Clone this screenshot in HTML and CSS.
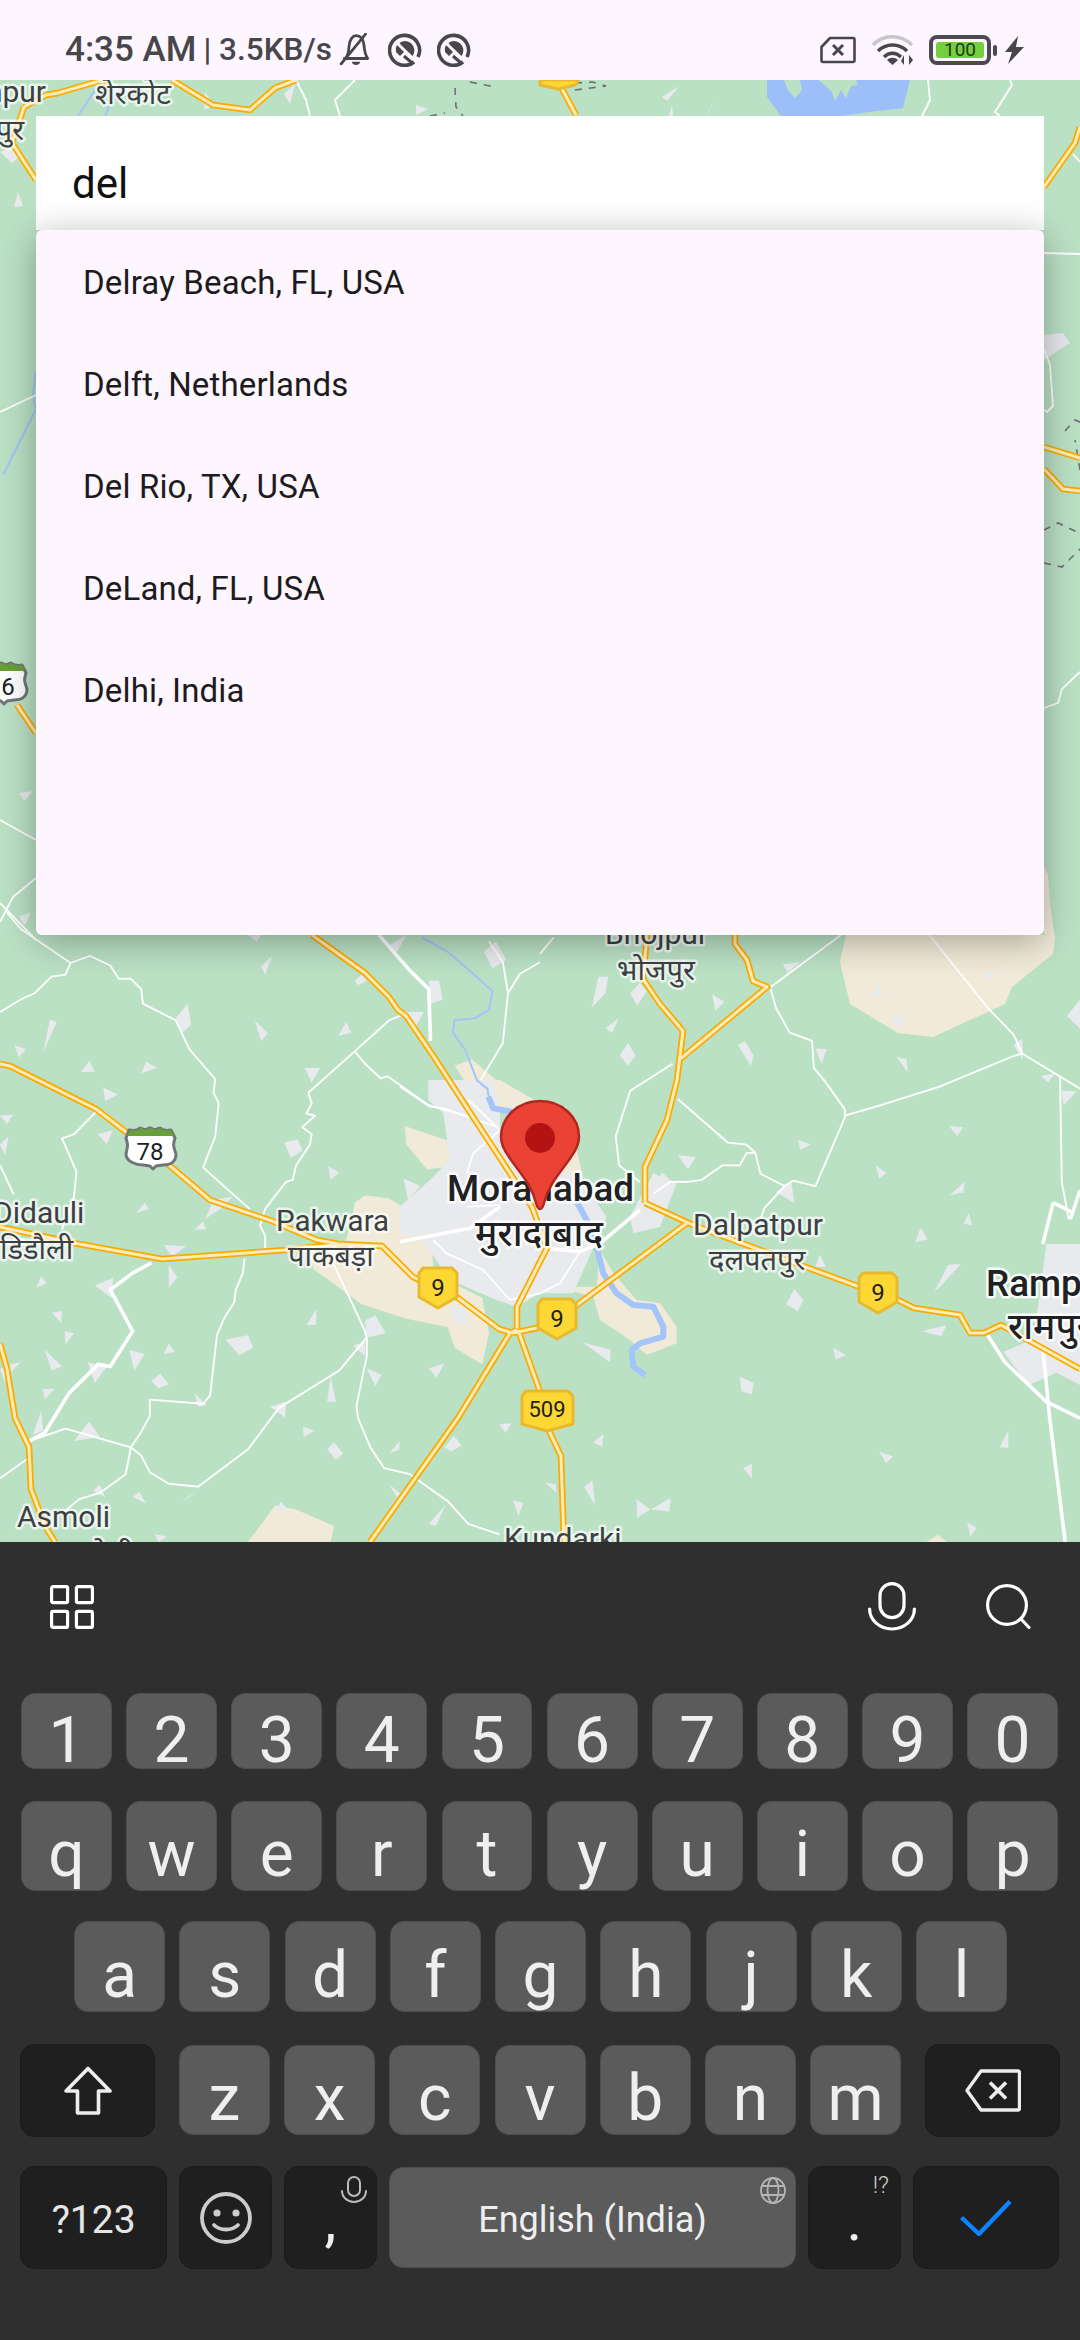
FILE: index.html
```html
<!DOCTYPE html>
<html lang="en">
<head>
<meta charset="utf-8">
<title>Location search</title>
<link rel="stylesheet" href="styles.css">
</head>
<body>
<div class="phone">
  <header class="status">
    <div class="status-left">
      <span class="clock">4:35 AM</span>
      <span class="net">| 3.5KB/s</span>
      <svg class="ic-bell" viewBox="0 0 32 32"><path d="M6 24c3-3 3-6 3.500-12C10 6 13 2.500 16 2.500c5 0 7 4 7.500 9 .5 6 1 9 3.500 12.500H4" fill="none" stroke="currentColor" stroke-width="2.600" stroke-linejoin="round"/><path d="M25 1 2 29" stroke="currentColor" stroke-width="2.600" stroke-linecap="round"/><path d="M12 27h8c-.5 2-2 3-4 3s-3.500-1-4-3z" fill="currentColor"/></svg>
      <svg class="ic-ring" viewBox="0 0 34 34"><path d="M26 29A15 15 0 1 1 30 24" fill="none" stroke="currentColor" stroke-width="3.600"/><path d="M17 8a9.500 9.500 0 0 1 7.500 15L13 12l-1.500-2A9.500 9.500 0 0 1 17 8z" fill="currentColor"/><path d="M9 12 16 19 12 23 8 19a9 9 0 0 1 1-7z" fill="currentColor"/><path d="M16 23 24 30" stroke="currentColor" stroke-width="3"/></svg>
      <svg class="ic-ring" viewBox="0 0 34 34"><path d="M26 29A15 15 0 1 1 30 24" fill="none" stroke="currentColor" stroke-width="3.600"/><path d="M17 8a9.500 9.500 0 0 1 7.500 15L13 12l-1.500-2A9.500 9.500 0 0 1 17 8z" fill="currentColor"/><path d="M9 12 16 19 12 23 8 19a9 9 0 0 1 1-7z" fill="currentColor"/><path d="M16 23 24 30" stroke="currentColor" stroke-width="3"/></svg>
    </div>
    <div class="status-right">
      <svg class="ic-sim" viewBox="0 0 36 28"><path d="M10 2h23a1.500 1.500 0 0 1 1.500 1.500v21a1.500 1.500 0 0 1-1.500 1.500H3a1.500 1.500 0 0 1-1.500-1.500V11z" fill="none" stroke="currentColor" stroke-width="2.600" stroke-linejoin="round"/><path d="M13 9l10 10M23 9 13 19" stroke="currentColor" stroke-width="3"/></svg>
      <svg class="ic-wifi" viewBox="0 0 43 32"><path d="M2 11C12 0 30 0 41 11" fill="none" stroke="#c9c6cb" stroke-width="3.400"/><path d="M7 17c8-8 21-8 29 0M13 23c5-5 12-5 17 0" fill="none" stroke="currentColor" stroke-width="3.400"/><path d="M16 26c3-3 8-3 11 0l-5.500 5z" fill="currentColor"/><path d="M33 21v10l-3-4zM38 31V21l4 5z" fill="currentColor"/></svg>
      <div class="battery"><div class="battery-shell"><span class="battery-fill">100</span></div><span class="battery-nub"></span></div>
      <svg class="ic-bolt" viewBox="0 0 19 28"><path d="M13 0 0 16h7L3 28 19 11h-8z" fill="currentColor"/></svg>
    </div>
  </header>

  <main class="stage">
    <svg class="map" viewBox="0 80 1080 1462" xmlns="http://www.w3.org/2000/svg">
      <defs>
        <g id="major-roads">
          <path d="M0 1064 10 1066 96 1109 126 1132 150 1147 169 1165 210 1200 272 1221 317 1240 339 1244 382 1246 413 1277 437 1288 458 1298 499 1329 513 1333"/>
          <path d="M0 1227 79 1244 162 1259 286 1250 344 1244"/>
          <path d="M312 935 365 973 389 997 398 1010 406 1016 434 1057 475 1120 500 1158 532 1207 547 1248 517 1307 517 1328"/>
          <path d="M370 1542 458 1418 510 1333 517 1330"/>
          <path d="M518 1330 539 1389 550 1433 561 1456 564 1542"/>
          <path d="M513 1333 537 1328 555 1320 577 1305 687 1223"/>
          <path d="M645 1203 693 1225 857 1286 877 1292 898 1300 914 1308 960 1315 970 1333 984 1333 1001 1325 1080 1369"/>
          <path d="M645 1203 645 1167 667 1120 677 1080 683 1031 660 1004 643 979 647 935"/>
          <path d="M679 1060 767 987 753 981 747 960 735 944 735 935"/>
          <path d="M0 1344 7 1369 15 1418 29 1447 31 1489 45 1526 55 1542"/>
          <path d="M46 95 58 93 96 82 110 80"/>
          <path d="M172 80 213 105 250 110 275 88 296 80"/>
          <path d="M24 107 12 143 36 180"/>
          <path d="M24 107 46 95"/>
          <path d="M561 87 576 115"/>
          <path d="M1044 187 1075 143 1080 127"/>
          <path d="M1044 447 1080 458"/>
          <path d="M1044 469 1063 489 1080 491"/>
          <path d="M17 705 36 733"/>
        </g>
      </defs>

      <g class="land" transform="translate(0 900) scale(.3444 .4146)">
        <polygon points="1030,730 1060,712 1130,720 1180,745 1240,720 1260,900 1400,960 1420,1045 1400,1120 1320,1080 1300,1030 1180,1010 1050,975 910,890 900,860 1000,830 1020,780"/>
        <polygon points="1175,545 1300,580 1330,640 1240,650 1180,590"/>
        <polygon points="1320,400 1370,385 1450,440 1500,500 1400,500"/>
        <polygon points="720,1548 800,1460 860,1470 970,1510 960,1548"/>
      </g>
      <g class="land">
        <polygon points="846,935 840,962 850,1004 898,1033 933,1037 1005,1004 1012,987 1053,954 1055,935"/>
        <polygon points="1044,867 1048,875 1050,903 1055,940 1044,940"/>
        <polygon points="926,1542 938,1535 947,1542"/>
      </g>
      <g class="land" transform="translate(400 1080) scale(.3333)">
        <polygon points="470,620 590,620 600,510 640,580 710,660 780,670 830,740 830,790 740,825 690,780 600,720 580,650"/>
        <polygon points="240,0 300,0 420,70 500,80 560,340 620,410 560,400 400,200"/>
      </g>
      <g class="town" transform="translate(400 1080) scale(.3333)">
        <polygon points="85,0 280,0 300,90 300,150 540,300 620,410 590,480 520,640 420,640 350,680 290,660 150,600 60,470 0,460 0,380 90,300 150,240 130,100 85,60"/>
        <polygon points="690,410 760,280 830,310 780,440 700,460"/>
        <polygon points="145,680 200,685 200,730 170,730"/>
      </g>
      <g class="town" transform="translate(540 900) scale(.3444 .4146)">
        <polygon points="1470,830 1568,830 1568,1170 1500,1140 1420,1170 1345,1090 1430,1060 1450,960"/>
      </g>

      <path class="lake" d="M767 80H910L903 108 869 112 843 116H781L767 97z"/>
      <path class="forest" d="M784 80 788 90 795 98 802 90 800 80zM819 80 832 92 835 101 841 90 846 98 851 86 858 85 856 80z"/>

      <g class="patches" transform="translate(0 900) scale(.3444 .4146)">
        <polygon points="758,160 790,135 770,180"/><polygon points="125,368 145,288 165,295"/><polygon points="42,350 75,360 55,380"/><polygon points="235,415 260,388 275,415"/><polygon points="410,418 425,390 455,405"/><polygon points="300,452 342,470 305,485"/><polygon points="740,290 778,322 758,340"/><polygon points="982,328 1005,295 1020,320"/><polygon points="885,405 930,405 905,440"/><polygon points="953,642 985,657 960,675"/><polygon points="1172,672 1220,690 1185,725"/><polygon points="285,565 328,555 310,590"/><polygon points="0,520 38,518 20,540"/><polygon points="0,590 25,570 15,615"/><polygon points="825,585 865,577 878,605 845,622"/><polygon points="510,285 545,250 555,300 530,320"/><polygon points="395,755 420,730 433,745"/><polygon points="595,770 620,725 675,715 640,745"/><polygon points="565,795 590,775 598,795"/><polygon points="475,832 540,835 500,860"/><polygon points="490,880 515,910 490,935"/><polygon points="275,930 328,912 325,960"/><polygon points="105,935 120,908 135,925"/><polygon points="150,995 180,992 178,1020"/><polygon points="188,1040 215,1045 190,1072"/><polygon points="130,1085 180,1125 150,1135"/><polygon points="375,1085 420,1095 390,1135"/><polygon points="475,1095 490,1070 508,1090"/><polygon points="255,1115 310,1125 275,1165"/><polygon points="440,1160 465,1142 490,1168 460,1178"/><polygon points="125,1180 158,1178 130,1205"/><polygon points="95,1290 120,1232 125,1280"/><polygon points="215,1305 258,1258 290,1295"/><polygon points="1060,1015 1090,1002 1120,1045 1065,1055"/><polygon points="1025,1075 1060,1065 1060,1100"/><polygon points="1065,1130 1108,1145 1090,1172"/><polygon points="1245,1130 1290,1118 1268,1152"/><polygon points="950,1210 960,1150 975,1210"/><polygon points="890,1025 918,988 918,1025"/><polygon points="655,1060 720,1050 735,1080 695,1098"/><polygon points="880,1270 912,1280 882,1295"/><polygon points="785,1222 830,1210 828,1248"/><polygon points="1130,1335 1160,1305 1160,1325"/><polygon points="950,1325 970,1308 996,1335 975,1350"/><polygon points="1290,1320 1318,1292 1340,1315 1310,1330"/><polygon points="1450,1265 1485,1262 1468,1285"/><polygon points="565,1190 600,1218 575,1222"/><polygon points="1130,1410 1175,1440 1160,1450"/><polygon points="385,1440 405,1428 424,1455"/><polygon points="530,1450 578,1425 545,1440"/><polygon points="1245,1505 1295,1458 1265,1510"/><polygon points="1490,1448 1520,1455 1505,1485"/><polygon points="800,1480 815,1450 835,1470"/><polygon points="270,1425 290,1410 305,1440"/><polygon points="450,1530 485,1535 460,1548"/><polygon points="30,1120 60,1115 30,1140"/><polygon points="0,1130 30,1130 15,1165"/><polygon points="720,84 760,84 745,100"/><polygon points="1130,110 1180,84 1150,130"/><polygon points="1405,125 1440,100 1470,145 1430,165"/><polygon points="1030,195 1050,180 1065,195 1040,205"/><polygon points="1245,195 1275,195 1285,240 1250,250"/><polygon points="1180,270 1230,270 1205,310"/><polygon points="55,40 90,30 70,55"/>
      </g>
      <g class="patches" transform="translate(540 900) scale(.3444 .4146)">
        <polygon points="150,260 170,185 198,185 190,225"/><polygon points="262,225 290,200 310,220 282,255"/><polygon points="190,310 228,285 210,320"/><polygon points="232,375 255,345 278,375 255,400"/><polygon points="575,350 595,340 620,375 612,400"/><polygon points="500,228 535,245 510,268"/><polygon points="705,155 755,150 720,175"/><polygon points="800,358 832,360 818,395"/><polygon points="750,578 785,590 755,603"/><polygon points="400,615 452,620 430,650"/><polygon points="330,690 355,658 385,680 345,705"/><polygon points="685,705 730,680 738,730"/><polygon points="1285,165 1322,178 1298,195"/><polygon points="1020,280 1060,283 1040,310"/><polygon points="965,230 985,195 992,232"/><polygon points="1035,378 1065,385 1068,415"/><polygon points="1375,350 1400,335 1402,385"/><polygon points="1455,425 1495,418 1475,440"/><polygon points="1515,460 1558,462 1520,495"/><polygon points="1188,545 1228,548 1212,570"/><polygon points="975,640 1005,658 985,672"/><polygon points="1190,712 1232,680 1230,705"/><polygon points="1230,780 1245,755 1255,785"/><polygon points="1090,825 1105,790 1125,818"/><polygon points="1145,945 1185,880 1222,878 1165,930"/><polygon points="800,885 812,855 830,885"/><polygon points="715,975 738,938 765,965 748,992"/><polygon points="1110,1040 1180,1025 1165,1052"/><polygon points="852,1080 888,1098 858,1108"/><polygon points="580,1150 620,1165 615,1192 585,1185"/><polygon points="125,1068 205,1085 203,1115"/><polygon points="155,1308 185,1288 180,1318"/><polygon points="590,1370 615,1360 615,1395"/><polygon points="15,1405 45,1410 48,1430"/><polygon points="128,1415 152,1400 160,1460"/><polygon points="280,1445 320,1470 282,1490"/><polygon points="322,1470 380,1442 375,1475"/><polygon points="985,1330 1025,1342 1005,1358"/><polygon points="1335,1320 1360,1280 1360,1322"/><polygon points="1240,1500 1268,1515 1250,1535"/><polygon points="1530,280 1568,240 1568,310"/>
      </g>
      <g class="patches">
        <polygon points="14,207 18,192 23,206"/><polygon points="19,793 33,791 24,801"/><polygon points="20,919 30,915 25,925"/><polygon points="662,97 679,86 667,101"/><polygon points="706,117 717,95 708,112"/><polygon points="669,116 672,105 673,116"/><polygon points="284,94 295,84 290,104"/><polygon points="1044,335 1063,333 1070,343 1044,360"/><polygon points="416,105 428,109 416,115"/><polygon points="205,92 214,105 204,110"/>
        <polygon points="0,152 12,147 19,157 12,163"/>
      </g>

      <g class="river">
        <path d="M78 116 95 90M105 116 118 85"/>
        <path d="M36 370 33 395 36 409 3 475"/>
      </g>
      <g class="river thick" transform="translate(400 1080) scale(.3333)">
        <path d="M530 365 560 420 590 500 610 580 650 640 700 675 760 680 790 740 790 770 720 790 695 810 700 860 735 885"/>
        <path d="M265 50 280 85 335 95"/>
      </g>
      <g class="river" transform="translate(0 900) scale(.3444 .4146)">
        <path d="M1225 90 1300 125 1390 190 1430 220 1420 265 1380 285 1320 290 1315 320 1350 360 1385 435 1415 455 1425 500 1450 510"/>
      </g>

      <g class="white thin" transform="translate(0 900) scale(.3444 .4146)">
        <path d="M20 30 60 70 205 152 262 135 320 158 345 190 380 190 410 215 415 250 510 290 550 360 625 432 620 465 635 490 625 570 590 645 650 690 725 745"/>
        <path d="M205 152 190 180 150 185 100 225 60 240 0 270"/>
        <path d="M280 510 215 565 180 575 222 655 215 715 180 795"/>
        <path d="M1175 275 1130 290 1030 365 895 465 905 490 890 515 915 520 878 548 905 565 900 590 860 640 850 675 830 680 770 745 755 785 770 810 770 840"/>
        <path d="M1030 365 1060 395 1105 430 1125 425 1245 495 1350 520"/>
        <path d="M710 865 705 900 685 940 680 970 650 1010 630 1050 610 1195 590 1215 435 1205 435 1245 405 1290 380 1320 365 1385 290 1430 230 1445 180 1480"/>
        <path d="M85 1305 190 1275 380 1320 410 1340 435 1380 490 1408 575 1415 720 1325 810 1225 985 1135 1065 1055 1065 1100 1035 1220 1040 1250 1075 1320 1115 1370 1190 1385 1300 1450 1360 1505 1450 1530"/>
        <path d="M970 880 1060 1040 1065 1060"/>
        <path d="M0 1395 85 1345M0 640 40 710"/>
        <path d="M1420 100 1460 150 1475 225 1460 345 1395 435M1475 225 1510 178 1568 150"/>
      </g>
      <g class="white thick" transform="translate(0 900) scale(.3444 .4146)">
        <path d="M440 875 385 900 320 940 385 1040 320 1125 285 1120 200 1190 130 1285 85 1305"/>
        <path d="M1100 84 1190 170 1245 215 1250 340"/>
      </g>
      <g class="white thin" transform="translate(540 900) scale(.3444 .4146)">
        <path d="M0 130 40 90M670 210 875 84"/>
        <path d="M670 215 685 260 725 320 790 340 795 405 830 440 885 505 885 525 800 690 735 677 710 690 640 660 625 610 600 610 580 640 530 640 470 675 430 680 378 680 330 708"/>
        <path d="M400 480 545 585 600 590 625 610"/>
        <path d="M885 520 990 495 1160 450 1370 378 1400 370"/>
        <path d="M1130 84 1300 260 1375 325 1400 370 1568 455"/>
        <path d="M385 395 262 460 220 570 230 640 290 680"/>
        <path d="M710 690 650 745 630 800"/>
        <path d="M1510 425 1515 680 1535 770"/>
      </g>
      <g class="white thick" transform="translate(540 900) scale(.3444 .4146)">
        <path d="M1490 730 1550 755M1568 700 1540 770M1490 730 1460 830"/>
        <path d="M1300 1050 1350 1115 1470 1210 1568 1250"/>
        <path d="M1460 1080 1480 1250 1525 1548"/>
      </g>
      <g class="white thin" transform="translate(400 1080) scale(.3333)">
        <path d="M100 480 140 520 250 570 330 660 420 640 480 610 540 515"/>
        <path d="M300 150 220 220 200 280"/>
        <path d="M0 20 90 80 130 85 290 140M205 60 300 150"/>
        <path d="M200 380 300 375"/>
      </g>
      <g class="white thick" transform="translate(400 1080) scale(.3333)">
        <path d="M0 485 210 445 300 380"/>
        <path d="M440 505 540 515 600 490 720 390"/>
      </g>
      <g class="white thin">
        <path d="M0 412 36 395" class="w3"/>
        <path d="M0 820 36 840"/>
        <path d="M36 878 13 897 0 922" class="w3"/>
        <path d="M0 903 36 940"/>
        <path d="M1044 253 1080 254"/>
        <path d="M1044 349 1050 365 1053 406 1047 412 1044 410"/>
        <path d="M1073 154 1080 162"/>
        <path d="M1044 708 1058 703 1062 689 1080 672"/>
        <path d="M296 80 306 100 310 116"/>
        <path d="M355 80 335 100 340 116"/>
        <path d="M928 80 930 100 922 116"/>
        <path d="M1010 80 1012 85 995 112 1000 116"/>
      </g>
      <g class="border">
        <path d="M1065 431 1075 420 1082 423M1080 470 1075 440M1044 530 1058 523 1077 532M1044 563 1062 567 1080 549"/>
        <path d="M455 88 456 107 463 116M470 82 490 86 492 90M430 116 445 113M575 83 592 82 606 86 575 90"/>
      </g>

      <use href="#major-roads" class="road-o"/>
      <use href="#major-roads" class="road-i"/>

      <g class="labels">
        <text class="lbl" x="46" y="102" text-anchor="end">npur</text>
        <text class="lbl hi" x="24" y="140" text-anchor="end">पुर</text>
        <text class="lbl hi" x="95" y="104">शेरकोट</text>
        <text class="lbl" x="605" y="944">Bhojpur</text>
        <text class="lbl hi" x="617" y="980">भोजपुर</text>
        <text class="lbl" x="-7" y="1223">Didauli</text>
        <text class="lbl hi" x="0" y="1259">डिडौली</text>
        <text class="lbl pak" x="276" y="1231">Pakwara</text>
        <text class="lbl hi" x="288" y="1266">पाकबड़ा</text>
        <text class="lbl" x="693" y="1235">Dalpatpur</text>
        <text class="lbl hi" x="709" y="1270">दलपतपुर</text>
        <text class="lbl" x="17" y="1527">Asmoli</text>
        <text class="lbl hi" x="40" y="1564">असमोली</text>
        <text class="lbl" x="504" y="1549">Kundarki</text>
        <text class="lbl city" x="447" y="1201">Moradabad</text>
        <text class="lbl city-hi" x="475" y="1246">मुरादाबाद</text>
        <text class="lbl city" x="986" y="1296">Rampur</text>
        <text class="lbl city-hi" x="1008" y="1339">रामपुर</text>
      </g>

      <g class="shield">
        <path d="M540 80h38l-1 3-2 2-17 4-18-4z"/>
        <g transform="translate(417 1267)"><path d="M6 1h29l5 5v24l-19 11L2 30V6z"/><text x="21" y="29">9</text></g>
        <g transform="translate(536 1298)"><path d="M6 1h29l5 5v24l-19 11L2 30V6z"/><text x="21" y="29">9</text></g>
        <g transform="translate(857 1272)"><path d="M6 1h29l5 5v24l-19 11L2 30V6z"/><text x="21" y="29">9</text></g>
        <g transform="translate(520 1390)"><path d="M6 1h42l5 5v28l-26 7-25-7V6z"/><text class="wide" x="27" y="27">509</text></g>
      </g>

      <g class="us-shield" transform="translate(124 1126)">
        <path class="us-body" d="M5 4c5 1 8 1 11-2l5 2 5-2 5 2 5-2c4 3 7 3 11 2l4 8c-2 7-2 7 1 16 0 8-6 11-13 11l-7 1-3 3-3-3-7-1C13 39 2 36 2 28c2-9 2-9 0-16z"/>
        <path class="us-top" d="M3 10h47l-3-6c-3 1-7 1-10-2l-5 2-5-2-5 2-5-2c-3 3-6 3-11 2z"/>
        <text x="26" y="34">78</text>
      </g>
      <g class="us-shield" transform="translate(-25 661)">
        <path class="us-body" d="M5 4c5 1 8 1 11-2l5 2 5-2 5 2 5-2c4 3 7 3 11 2l4 8c-2 7-2 7 1 16 0 8-6 11-13 11l-7 1-3 3-3-3-7-1C13 39 2 36 2 28c2-9 2-9 0-16z"/>
        <path class="us-top" d="M3 10h47l-3-6c-3 1-7 1-10-2l-5 2-5-2-5 2-5-2c-3 3-6 3-11 2z"/>
        <text x="33" y="34">6</text>
      </g>

      <g class="pin">
        <path class="pin-body" d="M540 1209c-2 0-3-2-4-6-5-20-17-31-27-46-5-7-8-14-8-20 0-20 17-36 39-36s39 16 39 36c0 6-3 13-8 20-10 15-22 26-27 46-1 4-2 6-4 6z"/>
        <circle class="pin-dot" cx="540" cy="1138" r="15"/>
      </g>
    </svg>

    <section class="search">
      <div class="search-field">del</div>
      <ul class="results">
        <li class="result">Delray Beach, FL, USA</li>
        <li class="result">Delft, Netherlands</li>
        <li class="result">Del Rio, TX, USA</li>
        <li class="result">DeLand, FL, USA</li>
        <li class="result">Delhi, India</li>
      </ul>
    </section>
  </main>

  <section class="keyboard">
    <div class="toolbar">
      <svg class="tb-grid" viewBox="0 0 44 44"><g fill="none" stroke="#fff" stroke-width="3.200"><rect x="1.600" y="1.600" width="16" height="16" rx="1.500"/><rect x="26.400" y="1.600" width="16" height="16" rx="1.500"/><rect x="1.600" y="26.400" width="16" height="16" rx="1.500"/><rect x="26.400" y="26.400" width="16" height="16" rx="1.500"/></g></svg>
      <div class="tb-right">
        <svg class="tb-mic" viewBox="0 0 48 49"><g fill="none" stroke="#fff" stroke-width="3.200" stroke-linecap="round"><rect x="12" y="1.600" width="24" height="34" rx="12"/><path d="M1.600 27a22.400 20 0 0 0 44.800 0"/></g></svg>
        <svg class="tb-search" viewBox="0 0 45 45"><g fill="none" stroke="#fff" stroke-width="3.200" stroke-linecap="round"><circle cx="21" cy="21" r="19.400"/><path d="M35 35 43 43.500"/></g></svg>
      </div>
    </div>

    <div class="row row-num">
      <button class="key digit">1</button><button class="key digit">2</button><button class="key digit">3</button><button class="key digit">4</button><button class="key digit">5</button><button class="key digit">6</button><button class="key digit">7</button><button class="key digit">8</button><button class="key digit">9</button><button class="key digit">0</button>
    </div>
    <div class="row row-q">
      <button class="key">q</button><button class="key">w</button><button class="key">e</button><button class="key">r</button><button class="key">t</button><button class="key">y</button><button class="key">u</button><button class="key">i</button><button class="key">o</button><button class="key">p</button>
    </div>
    <div class="row row-a">
      <button class="key">a</button><button class="key">s</button><button class="key">d</button><button class="key">f</button><button class="key">g</button><button class="key">h</button><button class="key">j</button><button class="key">k</button><button class="key">l</button>
    </div>
    <div class="row row-z">
      <button class="key func shift"><svg class="ic-shift" viewBox="0 0 48 49"><path d="M24 2.500 46 25H34.500v22h-21V25H2z" fill="none" stroke="#eee" stroke-width="3.600" stroke-linejoin="round"/></svg></button>
      <div class="letters">
        <button class="key">z</button><button class="key">x</button><button class="key">c</button><button class="key">v</button><button class="key">b</button><button class="key">n</button><button class="key">m</button>
      </div>
      <button class="key func shift"><svg class="ic-del" viewBox="0 0 56 43"><path d="M16 2h37a1.500 1.500 0 0 1 1.500 1.500v36a1.500 1.500 0 0 1-1.500 1.500H16L2 21.500z" fill="none" stroke="#eee" stroke-width="3.400" stroke-linejoin="round"/><path d="M25 13.500 41 29.500M41 13.500 25 29.500" stroke="#eee" stroke-width="3.600"/></svg></button>
    </div>
    <div class="row row-bottom">
      <button class="key func sym">?123</button>
      <button class="key func small"><svg class="ic-emoji" viewBox="0 0 52 52"><g fill="none" stroke="#ccc" stroke-width="3.800"><circle cx="26" cy="26" r="24"/><path d="M14 33c6 6 18 6 24 0" stroke-linecap="round"/></g><circle cx="17" cy="21" r="3.600" fill="#ccc"/><circle cx="36" cy="21" r="3.600" fill="#ccc"/></svg></button>
      <button class="key func small punct">,<svg class="corner-mic" viewBox="0 0 26 27"><g fill="none" stroke="#bbb" stroke-width="2" stroke-linecap="round"><rect x="7" y="1" width="12" height="19" rx="6"/><path d="M1 15a12 11 0 0 0 24 0"/></g></svg></button>
      <button class="key space">English (India)<svg class="corner-globe" viewBox="0 0 26 27"><g fill="none" stroke="#b5b5b5" stroke-width="1.800"><ellipse cx="13" cy="13.500" rx="12" ry="12.500"/><ellipse cx="13" cy="13.500" rx="5.500" ry="12.500"/><path d="M2 9h22M2 18h22"/></g></svg></button>
      <button class="key func small punct">.<span class="corner-hint">!?</span></button>
      <button class="key func enter"><svg class="ic-check" viewBox="0 0 52 36"><path d="M1.500 17.500 19 34 50 1.500" fill="none" stroke="#0d84ff" stroke-width="4.400"/></svg></button>
    </div>
  </section>
</div>
</body>
</html>
```
FILE: styles.css
```css
* { box-sizing: border-box; }
html, body { margin: 0; padding: 0; }
body { width: 1080px; height: 2340px; overflow: hidden; font-family: Roboto, "Noto Sans", sans-serif; background: #2f2f2f; }
.phone { width: 1080px; height: 2340px; display: flex; flex-direction: column; }

/* status bar */
.status { height: 80px; flex: none; background: #fdf6fe; color: #47464b; display: flex; justify-content: space-between; align-items: flex-start; padding: 32px 56px 0 65px; }
.status-left, .status-right { display: flex; align-items: center; }
.clock { font-size: 35px; font-weight: 500; line-height: 36px; }
.net { font-size: 31.500px; font-weight: 500; line-height: 36px; margin-left: 7px; }
.ic-bell { width: 34px; height: 34px; margin-left: 7px; }
.ic-ring { width: 34px; height: 34px; margin-left: 15px; }
.status-right { margin-top: 2px; }
.ic-sim { width: 36px; height: 28px; }
.ic-wifi { width: 43px; height: 32px; margin-left: 15px; }
.battery { display: flex; align-items: center; margin-left: 15px; }
.battery-shell { width: 62px; height: 30px; border: 4px solid #4b4a50; border-radius: 8px; padding: 3px; display: flex; }
.battery-fill { flex: 1; background: #74cf3e; border-radius: 3px; color: #1f3d10; font-size: 19px; line-height: 16px; text-align: center; font-weight: 400; }
.battery-nub { width: 4px; height: 11px; background: #4b4a50; border-radius: 2px; margin-left: 2px; }
.ic-bolt { width: 19px; height: 28px; margin-left: 8px; }

/* map */
.stage { flex: none; height: 1462px; position: relative; overflow: hidden; background: #bbe1c5; }
.map { position: absolute; left: 0; top: 0; width: 1080px; height: 1462px; display: block; }
.map path, .map polygon, .map polyline { vector-effect: non-scaling-stroke; }
.land polygon { fill: #f1ead8; }
.town polygon { fill: #e8eaed; }
.forest { fill: #bbe1c5; }
.patches polygon { fill: #e8eaed; }
.lake { fill: #9dbff9; }
.river path { fill: none; stroke: #a3c5fa; stroke-width: 2; stroke-linejoin: round; }
.river.thick path { stroke-width: 6; }
.white path { fill: none; stroke: #fff; stroke-linejoin: round; }
.white.thin path { stroke-width: 1.800; }
.white.thick path { stroke-width: 3.600; }
.white .w3 { stroke-width: 3; }
.border path { fill: none; stroke: #6d7175; stroke-width: 1.600; stroke-dasharray: 7 7; }
.road-o { fill: none; stroke: #f9ab00; stroke-width: 6.500; stroke-linejoin: round; }
.road-i { fill: none; stroke: #feebb8; stroke-width: 3; stroke-linejoin: round; }
.lbl { font-family: Roboto, "Noto Sans", sans-serif; font-size: 30px; fill: #3c4043; stroke: rgba(255,255,255,.7); stroke-width: 5px; paint-order: stroke; stroke-linejoin: round; }
.lbl.hi { font-size: 29px; }
.lbl.pak { font-size: 29.500px; }
.lbl.city { font-size: 36.800px; font-weight: 500; fill: #202124; stroke: rgba(255,255,255,.85); }
.lbl.city-hi { font-size: 36.500px; font-weight: 500; fill: #202124; stroke: rgba(255,255,255,.85); }
.shield path { fill: #fdd835; stroke: #e8b92f; stroke-width: 3; stroke-linejoin: round; }
.shield text { font-family: Roboto, sans-serif; font-size: 24px; fill: #202124; text-anchor: middle; }
.shield text.wide { font-size: 22px; }
.us-body { fill: #fff; stroke: #70757a; stroke-width: 3; stroke-linejoin: round; }
.us-top { fill: #689f38; }
.us-shield text { font-family: Roboto, sans-serif; font-size: 24px; fill: #202124; text-anchor: middle; }
.pin-body { fill: #ea4335; stroke: #b3261e; stroke-width: 2.500; }
.pin-dot { fill: #b31412; }

/* search overlay */
.search { position: absolute; left: 36px; right: 36px; top: 36px; }
.search-field { height: 114px; background: #fff; font-size: 42px; line-height: 44px; padding: 46px 0 0 36px; color: #111; }
.results { list-style: none; margin: 0; padding: 2px 0 0; height: 705px; background: #fdf6fe; border-radius: 6px; box-shadow: 0 6px 36px rgba(0,0,0,.32); }
.result { height: 102px; padding-left: 47px; font-size: 33px; letter-spacing: .15px; line-height: 102px; color: #1d1b20; }

/* keyboard */
.keyboard { flex: 1; background: #2f2f2f; }
.toolbar { height: 151px; display: flex; justify-content: space-between; align-items: center; padding: 0 49px 22px 50px; }
.tb-grid { width: 44px; height: 44px; }
.tb-right { display: flex; align-items: center; gap: 70px; }
.tb-mic { width: 48px; height: 49px; }
.tb-search { width: 45px; height: 45px; }

.row { display: flex; gap: 14.200px; padding: 0 22px 0 21px; }
.row-num { height: 76px; }
.row-q { height: 90px; margin-top: 32px; }
.row-a { height: 91px; margin-top: 30px; padding: 0 73px 0 74px; }
.row-z { height: 90px; margin-top: 33px; padding: 0 20px; gap: 24px; align-items: center; }
.row-bottom { height: 103px; margin-top: 31px; padding: 0 20px; gap: 12px; }

.key { position: relative; flex: 1 1 0; min-width: 0; margin: 0; padding: 0 0 5px; height: 100%; background: #5b5b5b; border: 1px solid #4e4e4e; border-radius: 14px; color: #efefef; font: 400 64px/60px Roboto, sans-serif; display: flex; align-items: flex-end; justify-content: center; }
.digit { padding-bottom: 0; line-height: 54px; }
.func { background: #1f1f1f; border-color: #1b1b1b; }
.letters { flex: 1; height: 100%; display: flex; gap: 14.200px; }
.shift { flex: none; width: 135px; height: 93px; align-items: center; padding: 0; }
.sym { flex: none; width: 147px; font-size: 39px; align-items: center; padding: 5px 0 0; color: #e6e6e6; }
.small { flex: none; width: 93px; align-items: center; padding: 0; }
.punct { align-items: flex-end; padding-bottom: 18px; font-size: 60px; }
.space { flex: none; width: 407px; height: 101px; margin-top: 1px; font-size: 36px; align-items: center; padding: 5px 0 0; }
.enter { flex: none; width: 146px; align-items: center; padding: 0; }
.ic-shift { width: 48px; height: 49px; }
.ic-del { width: 56px; height: 43px; }
.ic-emoji { width: 52px; height: 52px; }
.ic-check { width: 52px; height: 36px; }
.corner-mic { position: absolute; right: 9px; top: 9px; width: 26px; height: 27px; }
.corner-globe { position: absolute; right: 9px; top: 9px; width: 26px; height: 27px; }
.corner-hint { position: absolute; right: 11px; top: 5px; font-size: 24px; line-height: 26px; font-weight: 300; color: #ccc; }
```
